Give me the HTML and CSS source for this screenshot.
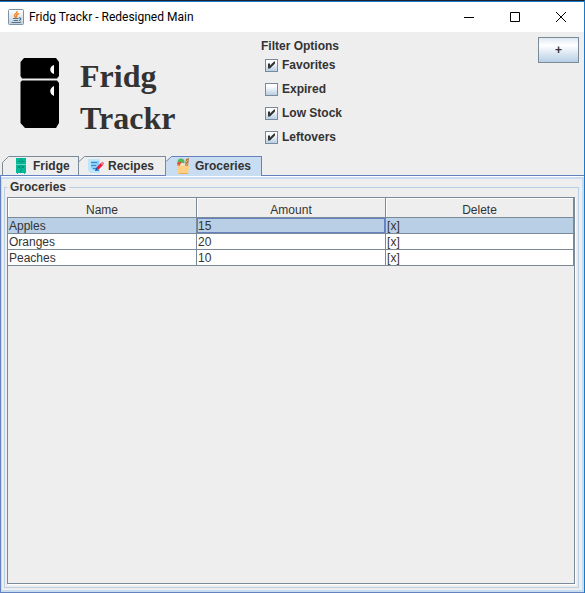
FILE: index.html
```html
<!DOCTYPE html>
<html lang="en">
<head>
<meta charset="utf-8">
<title>Fridg Trackr - Redesigned Main</title>
<link rel="stylesheet" href="styles.css">
</head>
<body>
<div class="window">
  <header class="titlebar">
    <svg class="app-icon" viewBox="0 0 16 16" aria-hidden="true">
      <defs><linearGradient id="jbg" x1="0" y1="0" x2="0" y2="1"><stop offset="0" stop-color="#fff"/><stop offset="1" stop-color="#c3d0da"/></linearGradient></defs>
      <rect x=".5" y=".5" width="15" height="15" rx="1" fill="url(#jbg)" stroke="#7d94a8"/>
      <path d="M9 2C10 4 6 5 6.500 7L8 9M11 4.500C9 5.500 7.500 6 9 8.500" fill="none" stroke="#ef8120" stroke-width="1.300"/>
      <path d="M5 9.500H10.500M5.500 11.500H10M11 9C13.500 8.500 13 11 11 11.500M3.500 13.500H11.500L13 13" fill="none" stroke="#4f7390" stroke-width="1.200"/>
    </svg>
    <span class="title">Fridg Trackr - Redesigned Main</span>
    <div class="controls">
      <button class="control" type="button" aria-label="Minimize"><svg viewBox="0 0 10 10"><path d="M0 5.500H10"/></svg></button>
      <button class="control" type="button" aria-label="Maximize"><svg viewBox="0 0 10 10"><path d="M.5.5H9.500V9.500H.5Z"/></svg></button>
      <button class="control" type="button" aria-label="Close"><svg viewBox="0 0 10 10"><path d="M0 0L10 10M10 0L0 10"/></svg></button>
    </div>
  </header>

  <section class="top">
    <div class="brand">
      <svg class="logo" viewBox="0 0 40 70" aria-hidden="true">
        <path d="M4 0H36L39 4V18L37 20.500H2L.5 18V4Z"/>
        <path d="M2 22.500H37L39 25V65L36 70H5L.5 65V24Z"/>
        <path d="M34 7V16C29 15 29 8 34 7ZM34 28V38C29 36 29 30 34 28Z" fill="#fff"/>
      </svg>
      <h1>Fridg Trackr</h1>
    </div>
    <fieldset class="filters">
      <legend>Filter Options</legend>
      <label><input type="checkbox" checked>Favorites</label>
      <label><input type="checkbox">Expired</label>
      <label><input type="checkbox" checked>Low Stock</label>
      <label><input type="checkbox" checked>Leftovers</label>
    </fieldset>
    <button class="add" type="button">+</button>
  </section>

  <nav class="tabs" role="tablist">
    <button class="tab fridge" type="button" role="tab">
      <svg class="edge" viewBox="0 0 7 19"><path d="M0 19V6.500L6 .5H7V19Z"/><path class="line" d="M.5 19V6.500L6.500.5H7"/></svg>
      <svg class="icon" viewBox="0 0 16 16" aria-hidden="true"><path d="M3 0H13V15H12V16H11V15H5V16H4V15H3Z" fill="#04b898"/><path d="M8 0V15" stroke="#069c82"/><path d="M3 6.500H13" stroke="#5fd6c0"/><path d="M6 3V4M10 3V4M6 8V10M10 8V10" stroke="#056b5d"/></svg>
      Fridge
    </button>
    <button class="tab recipes" type="button" role="tab">
      <svg class="edge" viewBox="0 0 7 19"><path d="M0 19V6.500L6 .5H7V19Z"/><path class="line" d="M0 5.500L5.500.5H7"/></svg>
      <svg class="icon" viewBox="0 0 16 16" aria-hidden="true"><path d="M0 1H12V15H2L0 12Z" fill="#bfe5fb"/><path d="M3 3H11V12H5L3 10Z" fill="#8bcff8"/><path d="M3 4.500H9M3 7.500H8M5 10.500H9M7 12.500H11" stroke="#338ed8"/><path d="M9.500 10.500L14 6" stroke="#ef173d" stroke-width="3"/><path d="M13.500 6.500L15.500 4.500" stroke="#ef7588" stroke-width="3"/><path d="M7 12.500L8.500 9.500L10.500 11.500Z" fill="#1d4fa0"/></svg>
      Recipes
    </button>
    <button class="tab groceries" type="button" role="tab" aria-selected="true">
      <svg class="edge" viewBox="0 0 7 19"><path d="M0 19V6.500L6 .5H7V19Z"/><path class="line" d="M0 5.500L5.500.5H7"/></svg>
      <svg class="icon" viewBox="0 0 16 16" aria-hidden="true"><path d="M10 8L11 1L14 0L13 8Z" fill="#b87544"/><path d="M11 4L13 2M11 7L13 5" stroke="#e5ab65"/><circle cx="6" cy="4" r="3.500" fill="#55b85a"/><path d="M2 7C2 4 4 3 6 4V8H2Z" fill="#e94b35"/><path d="M5 8C5 5 7 4 10 6V8H5Z" fill="#f4eee2"/><path d="M2 6H14L13 16H3Z" fill="#fbc36d" fill-opacity=".3"/><path d="M2 7L4 8H14L13 16H3Z" fill="#ffd083"/><path d="M4 15.500H13" stroke="#e9ad59"/></svg>
      Groceries
    </button>
  </nav>

  <main class="pane">
    <fieldset class="group">
      <legend>Groceries</legend>
      <div class="scroll">
        <table>
          <colgroup><col class="even"><col class="even"><col></colgroup>
          <thead><tr><th>Name</th><th>Amount</th><th>Delete</th></tr></thead>
          <tbody>
            <tr class="selected"><td>Apples</td><td class="focus">15</td><td>[x]</td></tr>
            <tr><td>Oranges</td><td>20</td><td>[x]</td></tr>
            <tr><td>Peaches</td><td>10</td><td>[x]</td></tr>
          </tbody>
        </table>
      </div>
    </fieldset>
  </main>
</div>
</body>
</html>
```
FILE: styles.css
```css
* { box-sizing: border-box; }

body {
  margin: 0;
  color: #333;
  font: bold 12px/14px "Liberation Sans", Arial, sans-serif;
}

button { font: inherit; color: inherit; }

.window {
  display: flex;
  flex-direction: column;
  min-height: 100vh;
  background: #eee;
  border-top: 1px solid #1d2430;
  border-right: 1px solid #1979ca;
}

.titlebar {
  display: flex;
  align-items: center;
  height: 31px;
  padding-left: 8px;
  background: #fff;
  border-top: 1px solid #1979ca;
}

.app-icon { width: 16px; height: 16px; }

.title {
  flex: 1;
  margin-left: 5px;
  color: #000;
  font: 12px/16px Roboto, "Noto Sans", sans-serif;
  white-space: nowrap;
}

.controls { display: flex; height: 100%; }

.control {
  display: flex;
  align-items: center;
  justify-content: center;
  width: 46px;
  padding: 0;
  border: 0;
  background: none;
}

.control svg {
  width: 10px;
  height: 10px;
  overflow: visible;
  fill: none;
  stroke: #000;
}

.top {
  display: grid;
  grid-template-columns: 260px 1fr auto;
  height: 124px;
}

.brand {
  display: flex;
  align-items: center;
  gap: 20px;
  padding: 0 0 2px 20px;
}

.logo { width: 40px; height: 70px; }

h1 {
  width: 120px;
  margin: 0;
  padding-top: 7px;
  font: bold 32px/42px "Liberation Serif", "Times New Roman", serif;
}

.filters {
  display: flex;
  flex-direction: column;
  min-width: 0;
  margin: 0;
  padding: 0;
  border: 0;
}

.filters legend { padding: 7px 1px 0; }

.filters label {
  display: flex;
  align-items: center;
  gap: 4px;
  height: 24px;
  padding-left: 5px;
  line-height: 16px;
}

.filters input {
  appearance: none;
  width: 13px;
  height: 13px;
  margin: 0;
  border: 1px solid #7a8a99;
  background: linear-gradient(#fff, #fff 20%, #b8cfe5);
}

.filters input:checked::before {
  content: "";
  display: block;
  height: 11px;
  background: #333;
  clip-path: polygon(2px 4px, 4px 4px, 4px 6px, 8px 2px, 9px 2px, 9px 4px, 4px 9px, 2px 9px);
}

.add {
  width: 41px;
  height: 26px;
  margin: 5px 5px 0 0;
  padding: 0;
  border: 1px solid #7a8a99;
  background: linear-gradient(#dde8f3, #fff 30%, #b8cfe5);
}

.tabs {
  display: flex;
  z-index: 1;
  height: 19px;
  padding-left: 2px;
}

.tab {
  display: flex;
  align-items: center;
  position: relative;
  height: 19px;
  padding: 0;
  border: solid #7a8a99;
  border-width: 1px 1px 0 0;
  background: #eee;
  background-clip: padding-box;
}

.fridge { width: 77px; }
.recipes { width: 87px; }
.groceries {
  width: 96px;
  height: 20px;
  padding-bottom: 1px;
  background: #c8ddf2;
  border-color: #6382bf;
}

.edge {
  position: absolute;
  top: -1px;
  left: 0;
  width: 7px;
  height: 19px;
  background: #eee;
  fill: #eee;
}

.edge .line { fill: none; stroke: #7a8a99; }
.groceries .edge { fill: #c8ddf2; }
.groceries .edge .line { stroke: #6382bf; }

.icon {
  width: 16px;
  height: 16px;
  margin: 0 4px 0 9px;
}

.fridge .icon { margin-left: 11px; }

.pane {
  flex: 1;
  display: flex;
  padding: 2px 3px 2px 2px;
  border: 1px solid #6382bf;
  border-width: 1px 0 1px 1px;
  box-shadow: inset 0 1px #fff, inset 0 3px #c8ddf2, inset 1px 0 #c8ddf2, inset -2px -2px #c8ddf2;
}

.group {
  flex: 1;
  display: flex;
  min-width: 0;
  margin: 2px 2px 2px 1px;
  padding: 3px 3px 3px 2px;
  border: 1px solid #b8cfe5;
}

.group legend { padding: 1px 3px 0; line-height: 13px; }

.scroll {
  flex: 1;
  border: 1px solid #7a8a99;
  box-shadow: 1px 1px #fff;
}

table {
  width: 100%;
  table-layout: fixed;
  border-spacing: 0;
  font-weight: normal;
}

.even { width: 33.4%; }

th, td {
  height: 16px;
  padding: 1px 0 0 1px;
  line-height: 14px;
  border-right: 1px solid #7a8a99;
  border-bottom: 1px solid #7a8a99;
}

th {
  height: 20px;
  padding: 4px 0 0;
  font-weight: normal;
  box-shadow: inset 1px 1px #fff;
}

td { background: #fff; }
.selected td { background: #b8cfe5; }
.selected .focus { box-shadow: inset 0 0 0 1px #6382bf; }
```
